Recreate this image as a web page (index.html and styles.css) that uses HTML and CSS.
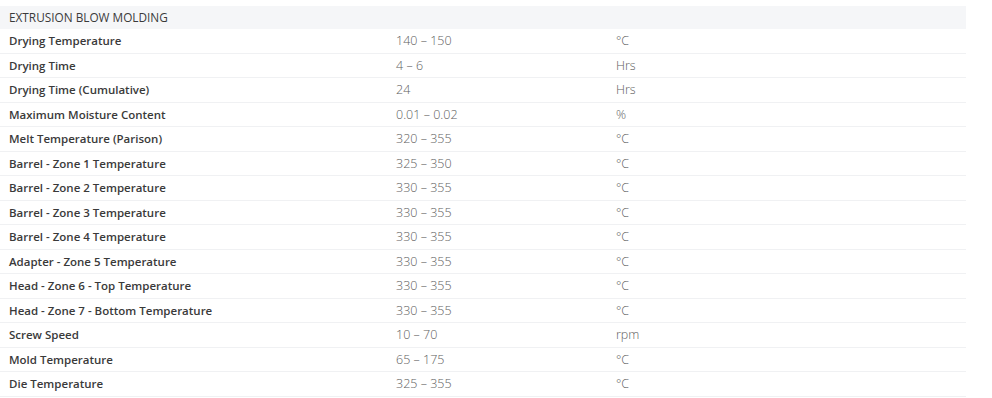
FILE: index.html
```html
<!DOCTYPE html>
<html>
<head>
<meta charset="utf-8">
<link rel="stylesheet" href="styles.css">
</head>
<body>
<table class="spec">
  <colgroup><col class="c-label"><col class="c-value"><col class="c-unit"></colgroup>
  <thead>
    <tr class="head"><th colspan="3">EXTRUSION BLOW MOLDING</th></tr>
  </thead>
  <tbody>
    <tr><td class="label">Drying Temperature</td><td class="val">140 – 150</td><td class="val">°C</td></tr>
    <tr><td class="label">Drying Time</td><td class="val">4 – 6</td><td class="val">Hrs</td></tr>
    <tr><td class="label">Drying Time (Cumulative)</td><td class="val">24</td><td class="val">Hrs</td></tr>
    <tr><td class="label">Maximum Moisture Content</td><td class="val">0.01 – 0.02</td><td class="val">%</td></tr>
    <tr><td class="label">Melt Temperature (Parison)</td><td class="val">320 – 355</td><td class="val">°C</td></tr>
    <tr><td class="label">Barrel - Zone 1 Temperature</td><td class="val">325 – 350</td><td class="val">°C</td></tr>
    <tr><td class="label">Barrel - Zone 2 Temperature</td><td class="val">330 – 355</td><td class="val">°C</td></tr>
    <tr><td class="label">Barrel - Zone 3 Temperature</td><td class="val">330 – 355</td><td class="val">°C</td></tr>
    <tr><td class="label">Barrel - Zone 4 Temperature</td><td class="val">330 – 355</td><td class="val">°C</td></tr>
    <tr><td class="label">Adapter - Zone 5 Temperature</td><td class="val">330 – 355</td><td class="val">°C</td></tr>
    <tr><td class="label">Head - Zone 6 - Top Temperature</td><td class="val">330 – 355</td><td class="val">°C</td></tr>
    <tr><td class="label">Head - Zone 7 - Bottom Temperature</td><td class="val">330 – 355</td><td class="val">°C</td></tr>
    <tr><td class="label">Screw Speed</td><td class="val">10 – 70</td><td class="val">rpm</td></tr>
    <tr><td class="label">Mold Temperature</td><td class="val">65 – 175</td><td class="val">°C</td></tr>
    <tr><td class="label">Die Temperature</td><td class="val">325 – 355</td><td class="val">°C</td></tr>
  </tbody>
</table>
</body>
</html>
```
FILE: styles.css
```css
html, body {
  margin: 0;
  padding: 0;
  background: #ffffff;
}
body {
  padding-top: 6px;
  font-family: "Open Sans", "Noto Sans", sans-serif;
  font-size: 11.5px;
  color: #333;
}
.spec {
  width: 966px;
  border-collapse: collapse;
  table-layout: fixed;
}
.c-label { width: 387px; }
.c-value { width: 220px; }
.spec th {
  text-align: left;
  font-weight: 400;
  font-size: 11.8px;
  color: #3a3a3a;
  background: #f5f6f8;
  padding: 4px 9px;
  line-height: 15px;
}
.spec td {
  padding: 4px 9px;
  line-height: 15.5px;
  border-bottom: 1px solid #f0f1f3;
}
.label {
  font-weight: 600;
  color: #3a3a3a;
}
.val {
  font-weight: 300;
  font-size: 12.5px;
  color: #5e5e5e;
}
```
